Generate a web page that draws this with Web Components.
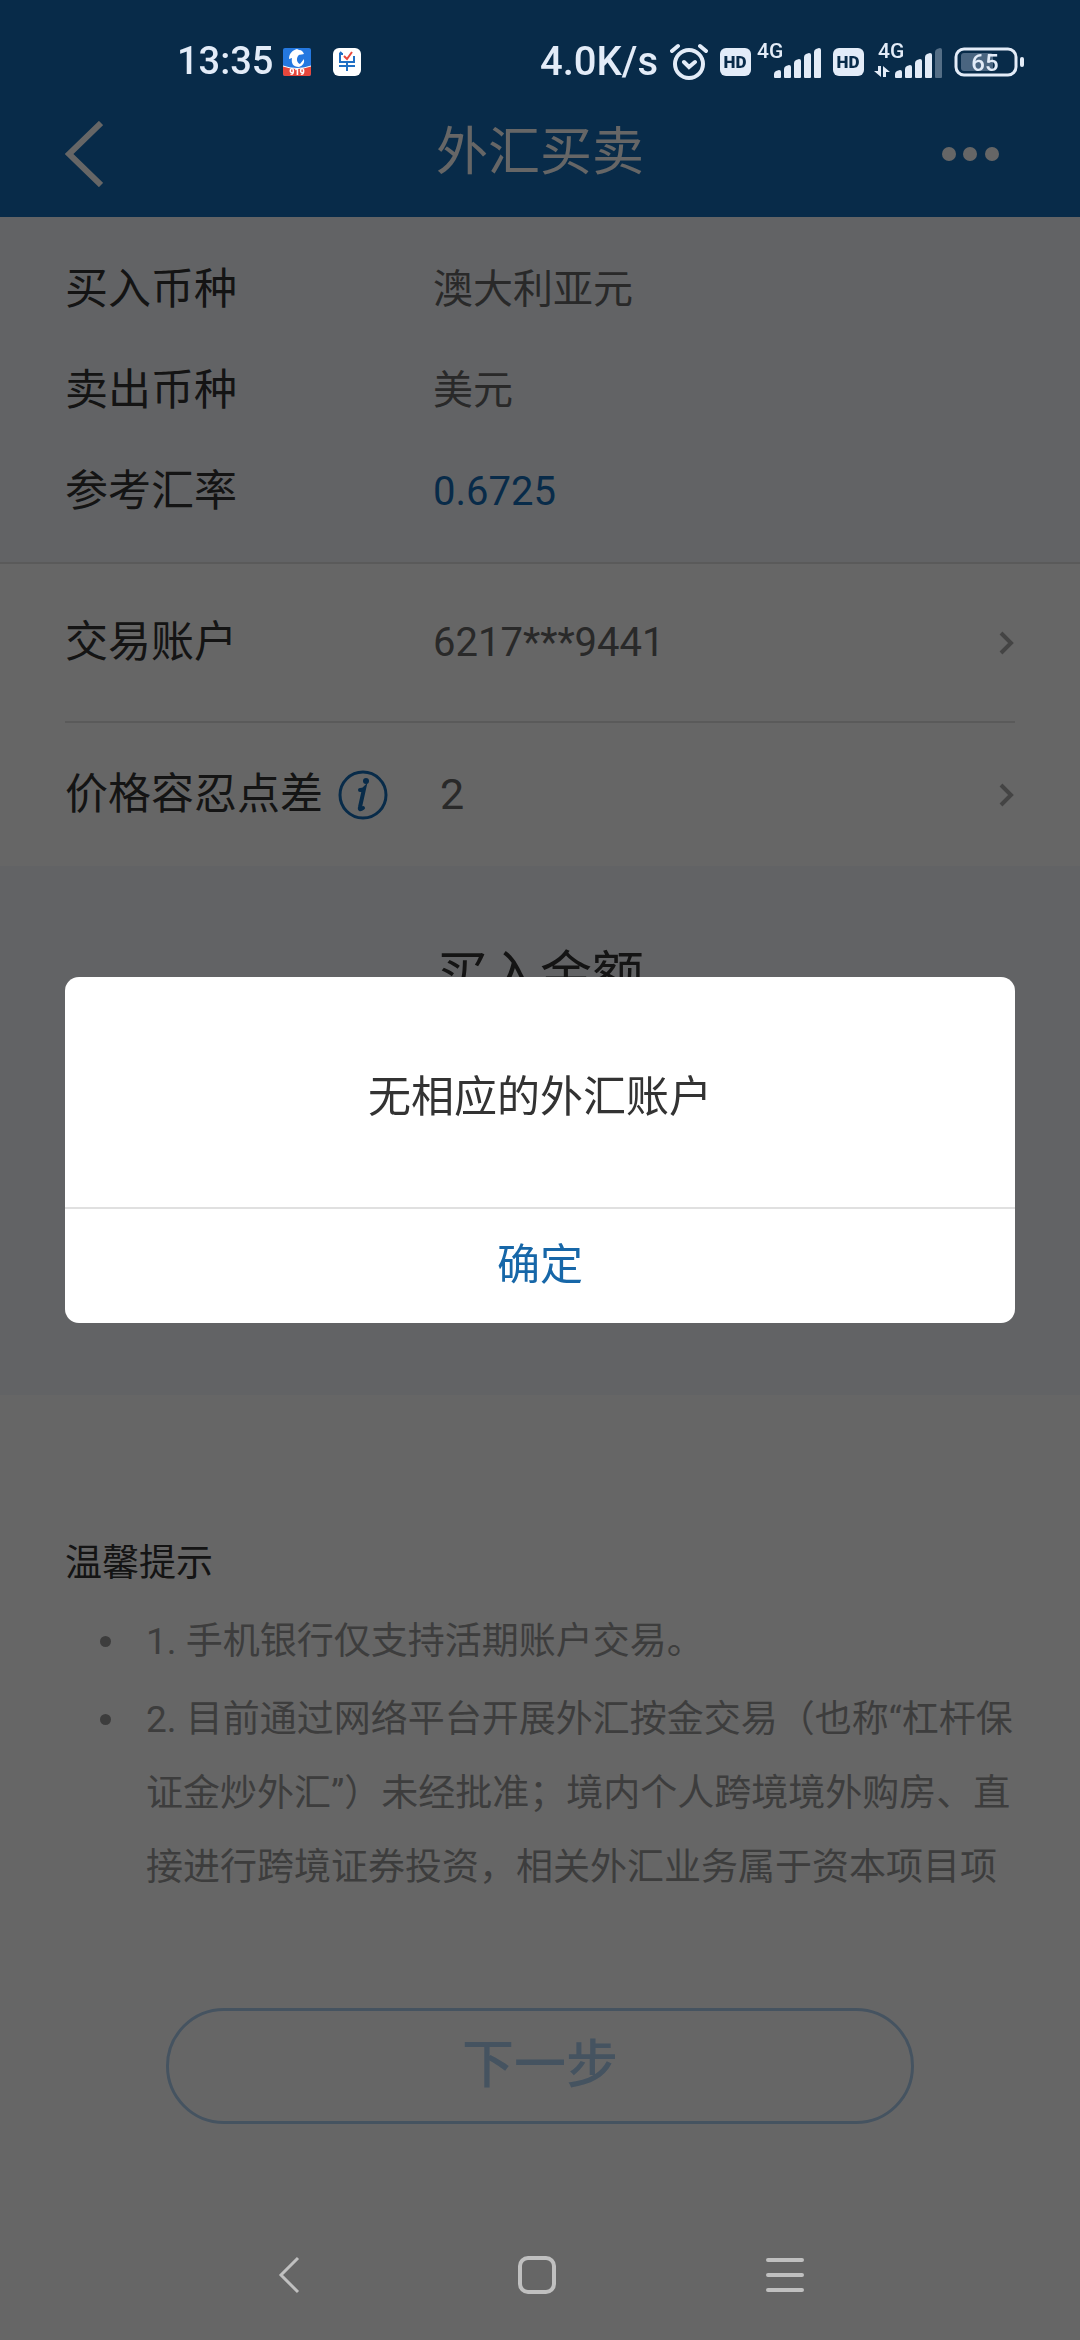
<!DOCTYPE html>
<html lang="zh-CN">
<head>
<meta charset="utf-8">
<meta name="viewport" content="width=device-width, initial-scale=1">
<title>外汇买卖</title>
<style>
:root {
  --blue: #146cb7;
  --ink: #333333;
  --muted: #666666;
  --faint: #999999;
  --panel: #f5f8fc;
  --line: #e0e0e0;
  --gutter: 65px;
}
body {
  margin: 0;
  background: #ffffff;
  color: var(--ink);
  font-family: Roboto, "Noto Sans CJK SC", sans-serif;
  font-size: 43px;
  line-height: 1.2;
}
</style>
</head>
<body>
<fx-screen>
  <status-bar slot="status" time="13:35" speed="4.0K/s" battery="65"></status-bar>
  <nav-header slot="header">外汇买卖</nav-header>

  <info-list>
    <info-row label="买入币种">澳大利亚元</info-row>
    <info-row label="卖出币种">美元</info-row>
    <info-row label="参考汇率" accent>0.6725</info-row>
  </info-list>

  <picker-row label="交易账户" value="6217***9441"></picker-row>
  <picker-row label="价格容忍点差" value="2" info large></picker-row>

  <amount-panel>买入金额</amount-panel>

  <tip-list heading="温馨提示">
    <li>1. 手机银行仅支持活期账户交易。</li>
    <li>2. 目前通过网络平台开展外汇按金交易（也称“杠杆保证金炒外汇”）未经批准；境内个人跨境境外购房、直接进行跨境证券投资，相关外汇业务属于资本项目项</li>
  </tip-list>

  <next-button>下一步</next-button>

  <alert-dialog slot="dialog" action="确定">无相应的外汇账户</alert-dialog>
  <system-nav slot="system"></system-nav>
</fx-screen>

<script>
// small base: clones a template string into an open shadow root
class BaseElement extends HTMLElement {
  constructor(){
    super();
    this.attachShadow({mode:'open'});
  }
  connectedCallback(){
    const t = document.createElement('template');
    t.innerHTML = this.view();
    this.shadowRoot.replaceChildren(t.content.cloneNode(true));
  }
  attr(name){ return this.getAttribute(name) || ''; }
}

// --- page frame ---
class FxScreen extends BaseElement {
  view(){
    return `
<style>
:host { display:flex; flex-direction:column; min-height:100vh; }
.top { background:var(--blue); }
main { flex:1; }
</style>
<div class="top">
  <slot name="status"></slot>
  <slot name="header"></slot>
</div>
<main><slot></slot></main>
<slot name="dialog"></slot>
<slot name="system"></slot>`;
  }
}
customElements.define('fx-screen', FxScreen);

// --- status bar, painted above the dimmed page ---
class StatusBar extends BaseElement {
  // signal strength: five bars, the ones past `level` are dim
  bars(level, left){
    const heights = [8, 13, 19, 25, 30];
    return heights.map((h,i)=>{
      const x = left + i*10, y = 40 - h;
      const o = i < level ? 1 : .35;
      return `<path d="M${x} 39V${y+4}q0-2 2-3l3-1q2 0 2 2V39q0 1-1 1h-5q-1 0-1-1Z" opacity="${o}"/>`;
    }).join('');
  }
  signal(level, arrows){
    const w = arrows ? 72 : 64;
    return `
<svg width="${w}" height="48" viewBox="0 0 ${w} 48" fill="currentColor" aria-hidden="true">
  <text x="${arrows ? 8 : 0}" y="20" font-size="21" font-weight="500">4G</text>
  ${this.bars(level, w - 47)}
  ${arrows ? '<path d="M8 28h3v11l-7-6h4ZM13 39V28l7 6h-4v5Z"/>' : ''}
</svg>`;
  }
  hd(){
    return `
<svg width="31" height="28" viewBox="0 0 31 28" aria-hidden="true">
  <rect width="31" height="28" rx="6" fill="currentColor"/>
  <text x="15" y="20" font-size="17" font-weight="900" text-anchor="middle" fill="#082b49">HD</text>
</svg>`;
  }
  view(){
    return `
<style>
:host {
  display:flex; align-items:center; position:relative; z-index:2;
  height:56px; padding:34px 56px 0 177px;
  color:#e3ecf8; font-size:38px; font-weight:500;
}
svg { display:block; flex:none; }
.left, .right, .sim { display:flex; align-items:center; }
.left { flex:1; gap:10px; }
.left svg + svg { margin-left:12px; }
.right { gap:12px; }
.sim { gap:6px; }
.speed { font-size:40px; }
</style>
<div class="left">
  <span>${this.attr('time')}</span>
  <svg width="28" height="28" viewBox="0 0 28 28" aria-hidden="true">
    <rect width="28" height="28" rx="2" fill="#2478e0"/>
    <path d="M0 18q14 5 28 0v8q0 2-2 2H2q-2 0-2-2Z" fill="#e8473c"/>
    <path d="M0 18q14 5 28 0" fill="none" stroke="#fff"/>
    <path d="M6 11C6 5 10 2 14 1l2 1c3 0 4 2 5 4-3 1-5 0-6 2-2 3-1 7 2 8l4-5q1 6-5 8C10 19 8 15 9 10Z" fill="#fff"/>
    <text x="14" y="27" font-size="9" font-weight="900" text-anchor="middle" fill="#fff">919</text>
  </svg>
  <svg width="28" height="28" viewBox="0 0 28 28" fill="none" aria-hidden="true">
    <rect width="28" height="28" rx="6" fill="#fff"/>
    <path d="M10 6H7v8h14V8M6 18h16M14 14v9M7 4l2 2" stroke="#1f6fc4" stroke-width="2"/>
    <path d="M11 8l3 3 5-7" stroke="#e8473c" stroke-width="2"/>
  </svg>
</div>
<div class="right">
  <span class="speed">${this.attr('speed')}</span>
  <svg width="38" height="38" viewBox="0 0 38 38" fill="none" stroke="currentColor" stroke-width="4" stroke-linecap="round" aria-hidden="true">
    <circle cx="19" cy="21" r="14"/>
    <path d="M2 8l6-5M36 8l-6-5M14 19l5 5 6-5"/>
  </svg>
  <div class="sim">${this.hd()}${this.signal(5, false)}</div>
  <div class="sim">${this.hd()}${this.signal(4, true)}</div>
  <svg width="70" height="30" viewBox="0 0 70 30" fill="none" aria-hidden="true">
    <rect x="2" y="2" width="60" height="26" rx="8" stroke="currentColor" stroke-width="3"/>
    <rect x="7" y="6" width="32" height="18" rx="3" fill="#4a6580"/>
    <rect x="66" y="10" width="4" height="10" rx="2" fill="currentColor"/>
    <text x="31" y="24" font-size="24" font-weight="500" text-anchor="middle" fill="currentColor">${this.attr('battery')}</text>
  </svg>
</div>`;
  }
}
customElements.define('status-bar', StatusBar);

// --- title bar ---
class NavHeader extends BaseElement {
  view(){
    return `
<style>
:host { display:block; color:#ffffff; }
header {
  display:grid; grid-template-columns:1fr auto 1fr; align-items:center;
  height:127px; padding:0 var(--gutter);
}
h1 { margin:0; font-size:52px; font-weight:400; }
button { padding:0; border:0; background:none; color:inherit; }
button:first-child { justify-self:start; }
button:last-child { justify-self:end; padding-right:16px; }
svg { display:block; }
</style>
<header>
  <button type="button" aria-label="返回">
    <svg width="38" height="66" viewBox="0 0 38 66" fill="none" stroke="currentColor" stroke-width="6"><path d="M36 2L4 33l32 31"/></svg>
  </button>
  <h1><slot></slot></h1>
  <button type="button" aria-label="更多">
    <svg width="58" height="14" viewBox="0 0 58 14" fill="currentColor"><circle cx="8" cy="7" r="7"/><circle cx="29" cy="7" r="7"/><circle cx="51" cy="7" r="7"/></svg>
  </button>
</header>`;
  }
}
customElements.define('nav-header', NavHeader);

// --- read-only rows ---
class InfoList extends BaseElement {
  view(){
    return `
<style>
:host { display:block; padding:22px var(--gutter) 20px; background:var(--panel); border-bottom:2px solid var(--line); }
</style>
<slot></slot>`;
  }
}
customElements.define('info-list', InfoList);

class InfoRow extends BaseElement {
  view(){
    return `
<style>
:host { display:block; }
dl { display:flex; align-items:center; gap:52px; height:101px; margin:0; }
dt { min-width:316px; }
dd { margin:0; font-size:40px; color:var(--muted); }
:host([accent]) dd { color:var(--blue); }
</style>
<dl><dt>${this.attr('label')}</dt><dd><slot></slot></dd></dl>`;
  }
}
customElements.define('info-row', InfoRow);

// --- rows that open a picker ---
class PickerRow extends BaseElement {
  view(){
    const info = this.hasAttribute('info') ? `
<button type="button" aria-label="说明">
  <svg width="50" height="50" viewBox="0 0 50 50" fill="none" stroke="currentColor">
    <circle cx="25" cy="25" r="23" stroke-width="3"/>
    <circle cx="28" cy="11" r="3" fill="currentColor" stroke="none"/>
    <path d="M22 20q3 0 4-1l-4 18q-1 4 3 1" stroke-width="4" stroke-linecap="round"/>
  </svg>
</button>` : '';
    return `
<style>
:host { display:block; padding:0 var(--gutter); }
.row { display:flex; align-items:center; gap:52px; height:143px; }
:host(:not([large])) .row { height:157px; border-bottom:2px solid var(--line); }
.name { display:flex; align-items:center; gap:15px; min-width:316px; }
button { padding:0; border:0; background:none; color:var(--blue); }
svg { display:block; }
select {
  flex:1; min-width:0; padding:0; border:0; background:none; appearance:none;
  font:inherit; font-size:40px; color:var(--muted);
}
:host([large]) select { font-size:43px; }
.arrow { color:#aaaaaa; }
</style>
<div class="row">
  <div class="name"><label for="pick">${this.attr('label')}</label>${info}</div>
  <select id="pick"><option>${this.attr('value')}</option></select>
  <svg class="arrow" width="18" height="26" viewBox="0 0 18 26" fill="none" stroke="currentColor" stroke-width="4" aria-hidden="true"><path d="M4 3l10 10L4 23"/></svg>
</div>`;
  }
}
customElements.define('picker-row', PickerRow);

// --- amount area ---
class AmountPanel extends BaseElement {
  view(){
    return `
<style>
:host { display:block; min-height:454px; padding-top:75px; background:var(--panel); text-align:center; }
h2 { margin:0; font-size:52px; line-height:72px; font-weight:400; }
</style>
<h2><slot></slot></h2>`;
  }
}
customElements.define('amount-panel', AmountPanel);

// --- notes ---
class TipList extends BaseElement {
  view(){
    return `
<style>
:host { display:block; padding:132px 60px 0 var(--gutter); font-size:37px; line-height:74px; text-spacing-trim:space-all; }
h3 { margin:0; font-size:37px; font-weight:400; }
ul { display:flex; flex-direction:column; gap:4px; margin:4px 0 0; padding-left:35px; color:var(--faint); list-style:none; }
::slotted(li) { display:flex; gap:35px; }
::slotted(li)::before { content:""; flex:none; width:11px; height:11px; margin-top:31px; border-radius:50%; background:currentColor; }
</style>
<h3>${this.attr('heading')}</h3>
<ul><slot></slot></ul>`;
  }
}
customElements.define('tip-list', TipList);

class NextButton extends BaseElement {
  view(){
    return `
<style>
:host { display:flex; justify-content:center; padding:103px 166px 0; }
button {
  flex:1; height:116px; border:3px solid #adcff0; border-radius:58px; background:none;
  color:#adcff0; font:inherit; font-size:52px; font-weight:500;
}
</style>
<button type="button" disabled><slot></slot></button>`;
  }
}
customElements.define('next-button', NextButton);

// --- modal, dims everything but the system bars ---
class AlertDialog extends BaseElement {
  view(){
    return `
<style>
:host {
  position:fixed; inset:0; z-index:1; display:flex; align-items:center;
  padding:0 var(--gutter) 40px; background:rgba(0, 0, 0, 0.6);
}
.box { flex:1; background:#ffffff; border-radius:14px; overflow:hidden; text-align:center; }
p { margin:0; padding:88px 40px 78px; line-height:64px; }
button {
  display:block; width:100%; height:116px; padding:0; border:0; border-top:2px solid var(--line);
  background:none; font:inherit; color:#1767a8;
}
</style>
<div class="box" role="alertdialog" aria-modal="true" aria-labelledby="msg">
  <p id="msg"><slot></slot></p>
  <button type="button">${this.attr('action')}</button>
</div>`;
  }
}
customElements.define('alert-dialog', AlertDialog);

// --- android navigation keys ---
class SystemNav extends BaseElement {
  view(){
    return `
<style>
:host { display:block; position:relative; z-index:2; color:#c0c0c0; }
nav { display:flex; justify-content:center; gap:210px; height:130px; padding-right:6px; }
button { display:flex; align-items:center; justify-content:center; width:38px; padding:0; border:0; background:none; color:inherit; }
svg { display:block; flex:none; }
</style>
<nav>
  <button type="button" aria-label="后退"><svg width="38" height="38" viewBox="0 0 38 38" fill="none" stroke="currentColor" stroke-width="3"><path d="M28 2L11 19l17 17"/></svg></button>
  <button type="button" aria-label="主页"><svg width="38" height="38" viewBox="0 0 38 38" fill="none" stroke="currentColor" stroke-width="4"><rect x="2" y="2" width="34" height="34" rx="8"/></svg></button>
  <button type="button" aria-label="最近任务"><svg width="38" height="38" viewBox="0 0 38 38" stroke="currentColor" stroke-width="4" stroke-linecap="round"><path d="M2 4h34M2 19h34M2 34h34"/></svg></button>
</nav>`;
  }
}
customElements.define('system-nav', SystemNav);
</script>
</body>
</html>
